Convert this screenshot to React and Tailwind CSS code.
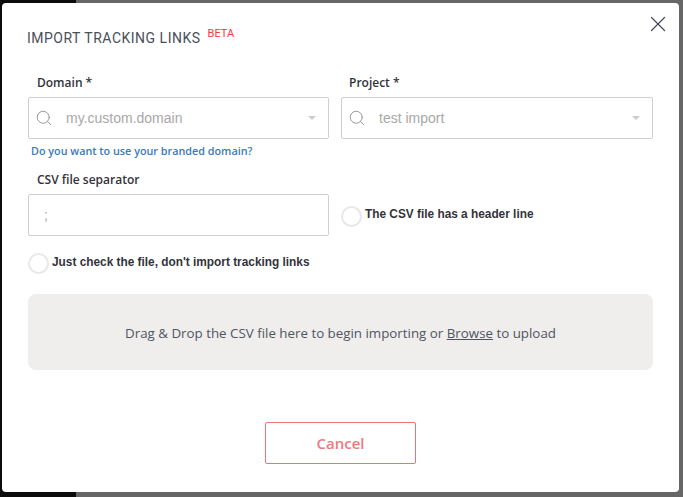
import { Search, X } from 'lucide-react';

function SelectBox({ value }) {
  return (
    <div className="flex h-[42px] items-center rounded-[2px] border border-[#cfcfcf] bg-white pl-[6px] pr-[12px]">
      <Search size={18} strokeWidth={1.2} className="shrink-0 text-[#8f8f8f]" />
      <span className="ml-[13px] font-['Liberation_Sans',sans-serif] text-[14px] text-[#a8a8a8]">{value}</span>
      <span className="ml-auto h-0 w-0 border-x-[4px] border-t-[4px] border-x-transparent border-t-[#cccccc]" />
    </div>
  );
}

function Radio({ label }) {
  return (
    <div className="flex items-center gap-[3px]">
      <span className="h-[21px] w-[21px] shrink-0 rounded-full border-2 border-[#e8e8e8] bg-white" />
      <span className="-mt-[2px] font-['Liberation_Sans',sans-serif] text-[11.85px] font-bold text-[#33333b]">{label}</span>
    </div>
  );
}

export default function App() {
  return (
    <div className="relative flex h-[497px] w-[683px] overflow-hidden">
      <div className="w-[76px] bg-[#0c0c0d]" />
      <div className="flex-1 bg-[#666666]" />

      <div className="absolute left-[2px] top-[3px] h-[489px] w-[677px] rounded-[4px] bg-white px-[26px]">
        <button className="absolute right-[8px] top-[8px] text-[#3f4a55]">
          <X size={26} strokeWidth={1.1} />
        </button>

        <div className="flex items-start pt-[25px]">
          <h2 className="-ml-[1px] font-['Roboto',sans-serif] text-[14px] leading-[20px] font-normal tracking-[0.5px] text-[#4a5058]">
            IMPORT TRACKING LINKS
          </h2>
          <span className="ml-[7px] mt-[-2px] font-['Roboto',sans-serif] text-[11px] leading-[16px] text-[#f0383f]">BETA</span>
        </div>

        <div className="mt-[25px] grid grid-cols-[301px_312px] gap-x-[12px]">
          <div>
            <label className="block pl-[9px] font-['Open_Sans',sans-serif] text-[12px] leading-[20px] font-semibold text-[#33333b]">
              Domain *
            </label>
            <div className="mt-[4px]">
              <SelectBox value="my.custom.domain" />
            </div>
            <a className="mt-[5px] block pl-[3px] font-['Open_Sans',sans-serif] text-[10.8px] leading-[14px] font-semibold text-[#3a7ab8]">
              Do you want to use your branded domain?
            </a>
          </div>
          <div>
            <label className="block pl-[8px] font-['Open_Sans',sans-serif] text-[12px] leading-[20px] font-semibold text-[#33333b]">
              Project *
            </label>
            <div className="mt-[4px]">
              <SelectBox value="test import" />
            </div>
          </div>
        </div>

        <div className="mt-[12px] grid grid-cols-[301px_312px] gap-x-[12px]">
          <div>
            <label className="block pl-[9px] font-['Open_Sans',sans-serif] text-[12px] leading-[20px] font-semibold text-[#33333b]">
              CSV file separator
            </label>
            <div className="mt-[4px] flex h-[42px] items-center rounded-[2px] border border-[#cfcfcf] bg-white pl-[15px] font-['Liberation_Sans',sans-serif] text-[14px] text-[#a8a8a8]">
              ;
            </div>
          </div>
          <div className="flex items-center pt-[26px]">
            <Radio label="The CSV file has a header line" />
          </div>
        </div>

        <div className="mt-[17px]">
          <Radio label="Just check the file, don't import tracking links" />
        </div>

        <div className="mt-[20px] flex h-[76px] w-[625px] items-center justify-center rounded-[8px] bg-[#f0eeed] pt-[3px] font-['Open_Sans',sans-serif] text-[13.33px] text-[#4f5560]">
          <span>
            Drag &amp; Drop the CSV file here to begin importing or <a className="underline">Browse</a> to upload
          </span>
        </div>

        <div className="mt-[52px] flex justify-center">
          <button className="h-[42px] w-[151px] rounded-[2px] border border-[#ee7377] bg-white font-['Open_Sans',sans-serif] text-[15px] font-semibold text-[#f0787c]">
            Cancel
          </button>
        </div>
      </div>
    </div>
  );
}
